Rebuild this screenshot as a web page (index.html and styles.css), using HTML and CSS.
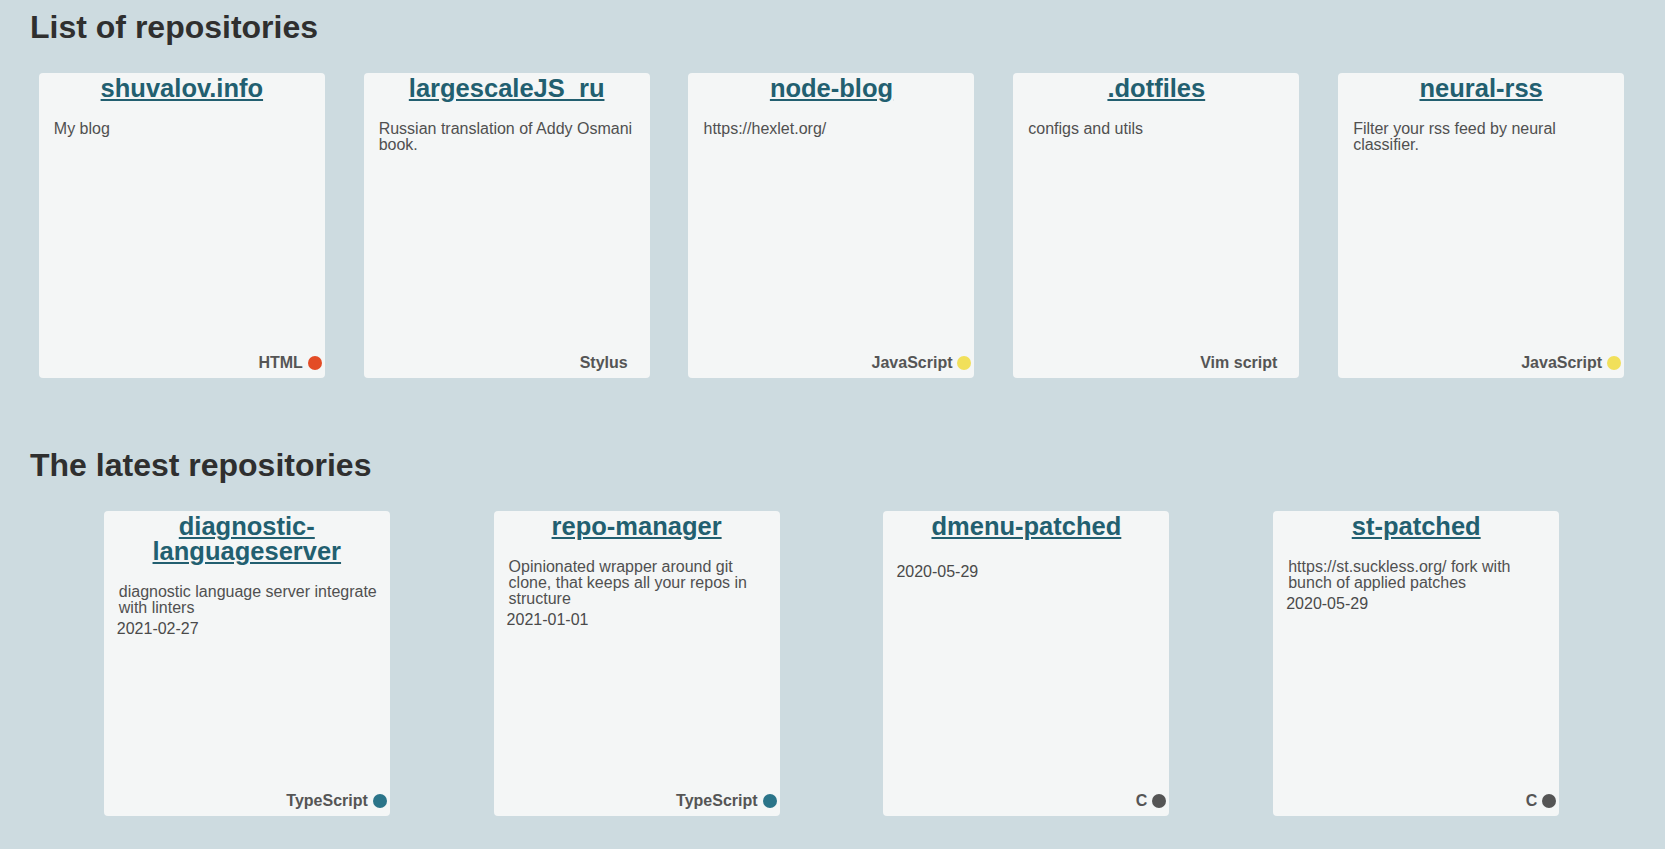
FILE: index.html
```html
<!DOCTYPE html>
<html lang="en">
<head>
<meta charset="utf-8">
<title>Repositories</title>
<link rel="stylesheet" href="styles.css">
</head>
<body>
<section class="section section-list">
  <h1 class="section-title">List of repositories</h1>
  <div class="cards">
    <div class="card">
      <h2 class="card-title"><a href="#">shuvalov.info</a></h2>
      <p class="card-desc">My blog</p>
      <div class="card-lang"><span class="lang-name">HTML</span><span class="lang-dot" style="background:#e34c26"></span></div>
    </div>
    <div class="card">
      <h2 class="card-title"><a href="#">largescaleJS_ru</a></h2>
      <p class="card-desc">Russian translation of Addy Osmani book.</p>
      <div class="card-lang"><span class="lang-name">Stylus</span><span class="lang-dot"></span></div>
    </div>
    <div class="card">
      <h2 class="card-title"><a href="#">node-blog</a></h2>
      <p class="card-desc">https://hexlet.org/</p>
      <div class="card-lang"><span class="lang-name">JavaScript</span><span class="lang-dot" style="background:#f1e05a"></span></div>
    </div>
    <div class="card">
      <h2 class="card-title"><a href="#">.dotfiles</a></h2>
      <p class="card-desc">configs and utils</p>
      <div class="card-lang"><span class="lang-name">Vim script</span><span class="lang-dot"></span></div>
    </div>
    <div class="card">
      <h2 class="card-title"><a href="#">neural-rss</a></h2>
      <p class="card-desc">Filter your rss feed by neural classifier.</p>
      <div class="card-lang"><span class="lang-name">JavaScript</span><span class="lang-dot" style="background:#f1e05a"></span></div>
    </div>
  </div>
</section>
<section class="section section-latest">
  <h1 class="section-title">The latest repositories</h1>
  <div class="cards">
    <div class="card">
      <h2 class="card-title"><a href="#">diagnostic-languageserver</a></h2>
      <p class="card-desc">diagnostic language server integrate with linters</p>
      <span class="card-date">2021-02-27</span>
      <div class="card-lang"><span class="lang-name">TypeScript</span><span class="lang-dot" style="background:#2b7489"></span></div>
    </div>
    <div class="card">
      <h2 class="card-title"><a href="#">repo-manager</a></h2>
      <p class="card-desc">Opinionated wrapper around git clone, that keeps all your repos in structure</p>
      <span class="card-date">2021-01-01</span>
      <div class="card-lang"><span class="lang-name">TypeScript</span><span class="lang-dot" style="background:#2b7489"></span></div>
    </div>
    <div class="card">
      <h2 class="card-title"><a href="#">dmenu-patched</a></h2>
      <p class="card-desc"></p>
      <span class="card-date">2020-05-29</span>
      <div class="card-lang"><span class="lang-name">C</span><span class="lang-dot" style="background:#555555"></span></div>
    </div>
    <div class="card">
      <h2 class="card-title"><a href="#">st-patched</a></h2>
      <p class="card-desc">https://st.suckless.org/ fork with bunch of applied patches</p>
      <span class="card-date">2020-05-29</span>
      <div class="card-lang"><span class="lang-name">C</span><span class="lang-dot" style="background:#555555"></span></div>
    </div>
  </div>
</section>
</body>
</html>
```

FILE: styles.css
```css
html, body {
  margin: 0;
  padding: 0;
}

body {
  background: #cddbe0;
  font-family: "Liberation Sans", Arial, sans-serif;
  color: #333333;
  padding-top: 9px;
}

.section-latest {
  margin-top: 69px;
}

.section-title {
  margin: 0 0 0 30px;
  font-size: 32px;
  font-weight: bold;
  line-height: normal;
  color: #2f2f2f;
}

.cards {
  display: flex;
  justify-content: space-evenly;
  margin-top: 27px;
  padding-right: 2px;
}

.card {
  width: 286px;
  height: 305px;
  box-sizing: border-box;
  background: #f4f6f6;
  border-radius: 4px;
  padding: 3px 0 6px;
  display: flex;
  flex-direction: column;
}

.card-title {
  margin: 0;
  padding: 0 8px;
  font-size: 25.5px;
  line-height: 25px;
  font-weight: bold;
  text-align: center;
}

.card-title a {
  color: #225f70;
  text-decoration: underline;
}

.card-desc {
  margin: 20px 0 5px;
  padding: 0 10px 0 15px;
  font-size: 16px;
  line-height: 16px;
  color: #505050;
}

.card-date {
  padding: 0 13px;
  font-size: 16px;
  line-height: 16px;
  color: #4a4a4a;
}

.card-lang {
  margin-top: auto;
  display: flex;
  justify-content: flex-end;
  align-items: center;
  gap: 5px;
  padding-right: 3px;
  font-size: 16px;
  font-weight: bold;
  color: #555555;
}

.lang-dot {
  width: 14px;
  height: 14px;
  border-radius: 50%;
}
```
